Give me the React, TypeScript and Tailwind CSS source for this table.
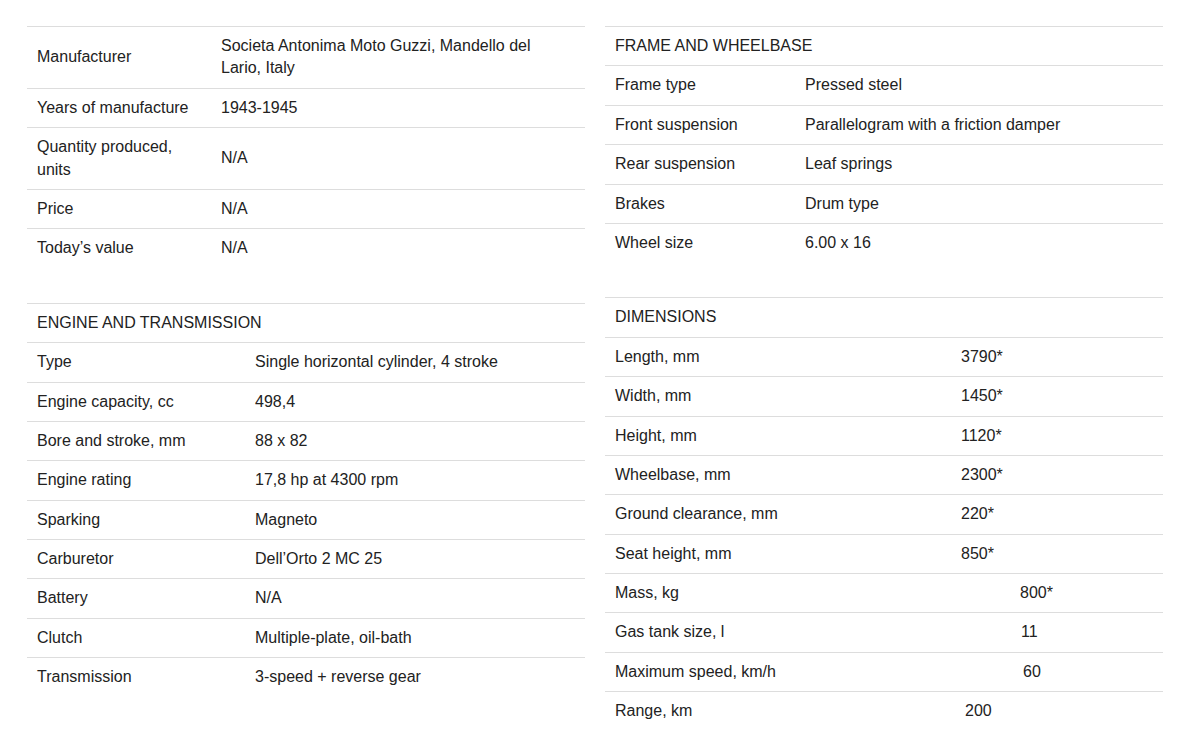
import React from 'react';

type Row = { label: string; value: string; shift?: string };

const general: Row[] = [
  { label: 'Manufacturer', value: 'Societa Antonima Moto Guzzi, Mandello del Lario, Italy' },
  { label: 'Years of manufacture', value: '1943-1945' },
  { label: 'Quantity produced, units', value: 'N/A' },
  { label: 'Price', value: 'N/A' },
  { label: 'Today’s value', value: 'N/A' },
];

const engine: Row[] = [
  { label: 'Type', value: 'Single horizontal cylinder, 4 stroke' },
  { label: 'Engine capacity, cc', value: '498,4' },
  { label: 'Bore and stroke, mm', value: '88 x 82' },
  { label: 'Engine rating', value: '17,8 hp at 4300 rpm' },
  { label: 'Sparking', value: 'Magneto' },
  { label: 'Carburetor', value: 'Dell’Orto 2 MC 25' },
  { label: 'Battery', value: 'N/A' },
  { label: 'Clutch', value: 'Multiple-plate, oil-bath' },
  { label: 'Transmission', value: '3-speed + reverse gear' },
];

const frame: Row[] = [
  { label: 'Frame type', value: 'Pressed steel' },
  { label: 'Front suspension', value: 'Parallelogram with a friction damper' },
  { label: 'Rear suspension', value: 'Leaf springs' },
  { label: 'Brakes', value: 'Drum type' },
  { label: 'Wheel size', value: '6.00 x 16' },
];

const dimensions: Row[] = [
  { label: 'Length, mm', value: '3790*' },
  { label: 'Width, mm', value: '1450*' },
  { label: 'Height, mm', value: '1120*' },
  { label: 'Wheelbase, mm', value: '2300*' },
  { label: 'Ground clearance, mm', value: '220*' },
  { label: 'Seat height, mm', value: '850*' },
  { label: 'Mass, kg', value: '800*', shift: 'pl-[69px]' },
  { label: 'Gas tank size, l', value: '11', shift: 'pl-[70px]' },
  { label: 'Maximum speed, km/h', value: '60', shift: 'pl-[72px]' },
  { label: 'Range, km', value: '200', shift: 'pl-[14px]' },
];

function SpecTable({ title, rows, labelW, valuePr = 'pr-[10px]' }: { title?: string; rows: Row[]; labelW: string; valuePr?: string }) {
  return (
    <div className="w-[558px]">
      {title && (
        <div className="border-t border-[#dddddd] px-[10px] py-2">{title}</div>
      )}
      {rows.map((r) => (
        <div key={r.label} className="flex border-t border-[#dddddd]">
          <div className={`${labelW} shrink-0 px-[10px] py-2 flex items-center`}>{r.label}</div>
          <div className={`flex-1 py-2 flex items-center ${valuePr} ${r.shift ?? 'pl-[10px]'}`}>{r.value}</div>
        </div>
      ))}
    </div>
  );
}

export default function App() {
  return (
    <div className="min-h-screen bg-white text-[#222222] text-[16px] leading-[1.4] font-['Liberation_Sans',Arial,sans-serif]">
      <div className="flex gap-[20px] px-[27px] pt-[26px]">
        <div className="flex flex-col gap-[35px]">
          <SpecTable rows={general} labelW="w-[184px]" valuePr="pr-[30px]" />
          <SpecTable title="ENGINE AND TRANSMISSION" rows={engine} labelW="w-[218px]" />
        </div>
        <div className="flex flex-col gap-[35px]">
          <SpecTable title="FRAME AND WHEELBASE" rows={frame} labelW="w-[190px]" />
          <SpecTable title="DIMENSIONS" rows={dimensions} labelW="w-[346px]" />
        </div>
      </div>
    </div>
  );
}
